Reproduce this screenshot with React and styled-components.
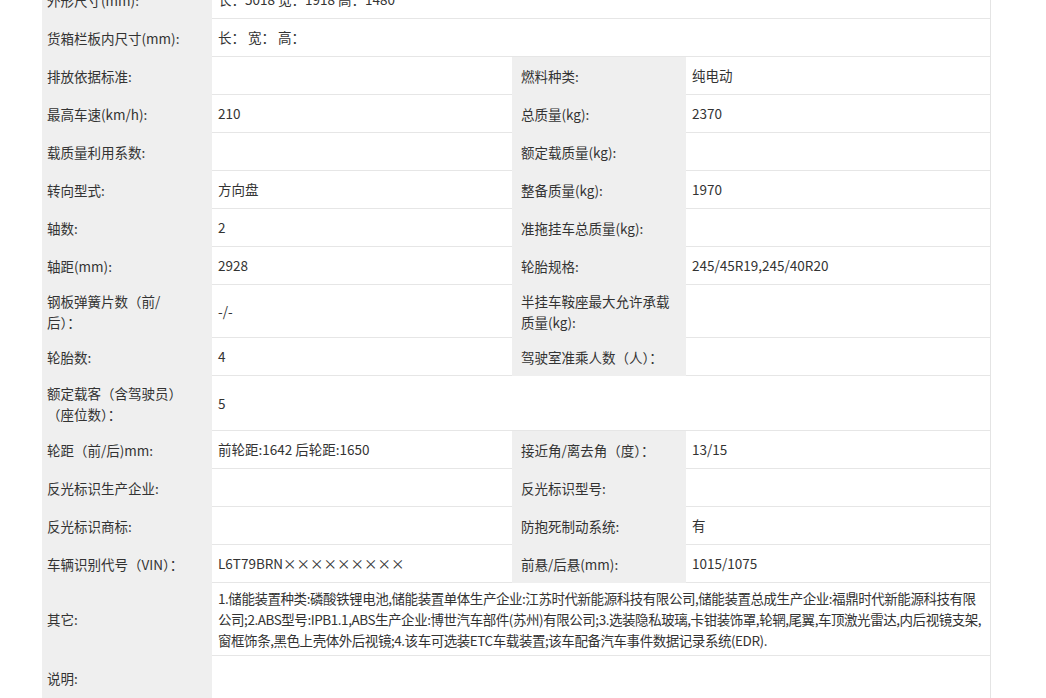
import React from "react";
import styled, { createGlobalStyle } from "styled-components";

const Global = createGlobalStyle`
  html, body { margin: 0; padding: 0; background: #fff; overflow: hidden; }
  body { font-family: "Microsoft YaHei", "Noto Sans CJK SC", "Liberation Sans", sans-serif; color: #333; font-size: 13.5px; }
`;

const Table = styled.div`
  margin: -19px 0 0 42px;
  width: 948px;
  border-right: 1px solid #e4e4e4;
`;

const Row = styled.div`
  display: grid;
  grid-template-columns: 170px 300px 174px 1fr;
  height: ${p => p.h || 38}px;
`;

const Label = styled.div`
  background: #efefef;
  display: flex;
  align-items: center;
  padding: 0 12px 0 ${p => (p.second ? 9 : 5)}px;
  line-height: 21px;
`;

const Value = styled.div`
  display: flex;
  align-items: center;
  padding: 0 6px;
  line-height: 21px;
  border-bottom: 1px solid #e6e6e6;
  grid-column: ${p => (p.span ? "2 / 5" : "auto")};
  letter-spacing: ${p => (p.tight ? "-0.45px" : "0")};
`;

const rows = [
  { a: "外形尺寸(mm):", b: "长：5018 宽：1918 高：1480", span: true },
  { a: "货箱栏板内尺寸(mm):", b: "长：  宽：  高：", span: true },
  { a: "排放依据标准:", b: "", c: "燃料种类:", d: "纯电动" },
  { a: "最高车速(km/h):", b: "210", c: "总质量(kg):", d: "2370" },
  { a: "载质量利用系数:", b: "", c: "额定载质量(kg):", d: "" },
  { a: "转向型式:", b: "方向盘", c: "整备质量(kg):", d: "1970" },
  { a: "轴数:", b: "2", c: "准拖挂车总质量(kg):", d: "" },
  { a: "轴距(mm):", b: "2928", c: "轮胎规格:", d: "245/45R19,245/40R20" },
  { a: <span>钢板弹簧片数（前/<br />后）：</span>, b: "-/-", c: "半挂车鞍座最大允许承载质量(kg):", d: "", h: 53 },
  { a: "轮胎数:", b: "4", c: "驾驶室准乘人数（人）：", d: "" },
  { a: "额定载客（含驾驶员）（座位数）：", b: "5", span: true, h: 55 },
  { a: "轮距（前/后)mm:", b: "前轮距:1642 后轮距:1650", c: "接近角/离去角（度）：", d: "13/15" },
  { a: "反光标识生产企业:", b: "", c: "反光标识型号:", d: "" },
  { a: "反光标识商标:", b: "", c: "防抱死制动系统:", d: "有" },
  { a: "车辆识别代号（VIN）：", b: "L6T79BRN×××××××××", c: "前悬/后悬(mm):", d: "1015/1075" },
  {
    a: "其它:",
    b: "1.储能装置种类:磷酸铁锂电池,储能装置单体生产企业:江苏时代新能源科技有限公司,储能装置总成生产企业:福鼎时代新能源科技有限公司;2.ABS型号:IPB1.1,ABS生产企业:博世汽车部件(苏州)有限公司;3.选装隐私玻璃,卡钳装饰罩,轮辋,尾翼,车顶激光雷达,内后视镜支架,窗框饰条,黑色上壳体外后视镜;4.该车可选装ETC车载装置;该车配备汽车事件数据记录系统(EDR).",
    span: true,
    tight: true,
    h: 73,
  },
  { a: "说明:", b: "", span: true, h: 44 },
];

export default function App() {
  return (
    <>
      <Global />
      <Table>
        {rows.map((r, i) => (
          <Row key={i} h={r.h}>
            <Label>{r.a}</Label>
            <Value span={r.span} tight={r.tight}>{r.b}</Value>
            {!r.span && <Label second>{r.c}</Label>}
            {!r.span && <Value>{r.d}</Value>}
          </Row>
        ))}
      </Table>
    </>
  );
}
